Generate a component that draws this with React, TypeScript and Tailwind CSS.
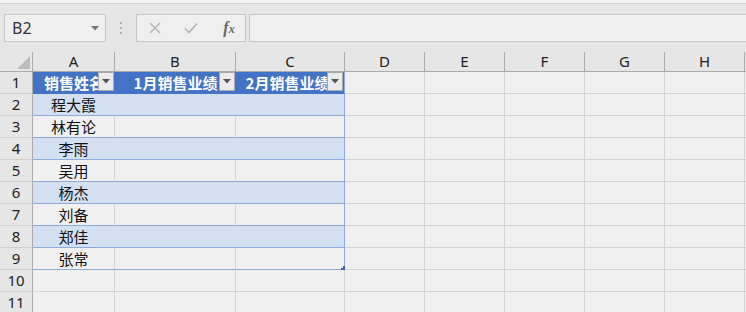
import React from "react";

const cols = [
  { key: "A", w: "w-[82px]" },
  { key: "B", w: "w-[121px]" },
  { key: "C", w: "w-[109px]" },
  { key: "D", w: "w-[80px]" },
  { key: "E", w: "w-[80px]" },
  { key: "F", w: "w-[80px]" },
  { key: "G", w: "w-[80px]" },
  { key: "H", w: "w-[80px]" },
];

const names = ["程大霞", "林有论", "李雨", "吴用", "杨杰", "刘备", "郑佳", "张常"];

const cjk = "font-['Noto_Sans_CJK_SC',sans-serif]";
const latin = "font-['Noto_Sans','Liberation_Sans',sans-serif]";

function FilterButton() {
  return (
    <div className="absolute right-[1px] top-[0px] w-[16px] h-[19px] bg-[#ebebeb] border border-[#a9a9a9] flex items-center justify-center">
      <svg width="8" height="5" viewBox="0 0 8 5">
        <path d="M0 0 L8 0 L4 4.5 Z" fill="#555" />
      </svg>
    </div>
  );
}

function HeaderRow() {
  return (
    <div className="flex h-[22px]">
      <div className="w-[33px] shrink-0 bg-[#e6e6e6] border-r border-b border-r-[#ababab] border-b-[#d0d0d0] flex items-center justify-center text-[15px] text-[#222]">
        1
      </div>
      {cols.map((c, i) => {
        if (i < 3) {
          const label = i === 0 ? "销售姓名" : i === 1 ? "1月销售业绩" : "2月销售业绩";
          return (
            <div
              key={c.key}
              className={`${c.w} shrink-0 relative bg-[#4472c4] border-b border-[#4472c4] ${i === 2 ? "border-r border-r-[#8ea9db] pr-[5px]" : ""} overflow-hidden flex items-center justify-center`}
            >
              <span className={`${cjk} font-bold text-white text-[15px] whitespace-nowrap leading-none`}>{label}</span>
              <FilterButton />
            </div>
          );
        }
        return <div key={c.key} className={`${c.w} shrink-0 bg-[#f0f0f0] border-r border-b border-[#d4d4d4]`} />;
      })}
      <div className="flex-1 bg-[#f0f0f0] border-b border-[#d4d4d4]" />
    </div>
  );
}

function DataRow({ n, name }: { n: number; name?: string }) {
  const inTable = n >= 2 && n <= 9;
  const banded = inTable && n % 2 === 0;
  return (
    <div className="flex h-[22px]">
      <div className="w-[33px] shrink-0 bg-[#e6e6e6] border-r border-b border-r-[#ababab] border-b-[#d0d0d0] flex items-center justify-center text-[15px] text-[#222]">
        {n}
      </div>
      {cols.map((c, i) => {
        if (inTable && i < 3) {
          return (
            <div
              key={c.key}
              className={`${c.w} shrink-0 relative border-b border-b-[#8ea9db] ${banded ? "bg-[#d2e0f1]" : "bg-[#f0f0f0]"} ${
                i === 2 ? "border-r border-r-[#8ea9db]" : banded ? "" : "border-r border-r-[#d4d4d4]"
              } ${banded && i < 2 ? "pr-[1px]" : ""} flex items-center justify-center`}
            >
              {i === 0 && name && <span className={`${cjk} text-[15px] text-[#111] leading-none`}>{name}</span>}
              {n === 9 && i === 2 && (
                <div className="absolute right-[-1px] bottom-[-1px] w-[5px] h-[5px]">
                  <div className="absolute right-0 bottom-0 w-[4px] h-[2px] bg-[#3f5fa8]" />
                  <div className="absolute right-0 bottom-0 w-[2px] h-[4px] bg-[#3f5fa8]" />
                </div>
              )}
            </div>
          );
        }
        return <div key={c.key} className={`${c.w} shrink-0 bg-[#f0f0f0] border-r border-b border-[#d4d4d4]`} />;
      })}
      <div className="flex-1 bg-[#f0f0f0] border-b border-[#d4d4d4]" />
    </div>
  );
}

export default function App() {
  return (
    <div className={`w-[746px] h-[312px] overflow-hidden bg-[#e6e6e6] ${latin}`}>
      {/* top strip */}
      <div className="h-[4px] bg-[#f3f3f3] border-b border-[#cfcfcf]" />

      {/* name box + formula bar */}
      <div className="flex items-start pt-[10px] h-[48px]">
        <div className="ml-[4px] w-[102px] h-[28px] bg-[#efefef] border border-[#c6c6c6] flex items-center justify-between pl-[7px] pr-[6px]">
          <span className="text-[16px] text-[#333] leading-none">B2</span>
          <svg width="8" height="5" viewBox="0 0 8 5">
            <path d="M0 0 L8 0 L4 4.5 Z" fill="#777" />
          </svg>
        </div>
        <div className="w-[30px] h-[28px] flex flex-col items-center justify-center gap-[3px]">
          <div className="w-[2px] h-[2px] bg-[#b0b0b0]" />
          <div className="w-[2px] h-[2px] bg-[#b0b0b0]" />
          <div className="w-[2px] h-[2px] bg-[#b0b0b0]" />
        </div>
        <div className="w-[110px] h-[28px] bg-[#efefef] border border-[#c6c6c6] flex items-center">
          <div className="w-[36px] flex justify-center">
            <svg width="12" height="12" viewBox="0 0 12 12">
              <path d="M1 1 L11 11 M11 1 L1 11" stroke="#b3b3b3" strokeWidth="1.4" />
            </svg>
          </div>
          <div className="w-[36px] flex justify-center">
            <svg width="14" height="12" viewBox="0 0 14 12">
              <path d="M1 6.5 L5 10.5 L13 1.5" stroke="#b3b3b3" strokeWidth="1.6" fill="none" />
            </svg>
          </div>
          <div className="w-[36px] flex justify-center pl-[4px]">
            <span className="font-['Liberation_Serif',serif] italic font-bold text-[16px] text-[#666] leading-none">
              f<span className="text-[12px]">x</span>
            </span>
          </div>
        </div>
        <div className="ml-[3px] flex-1 h-[28px] bg-[#efefef] border-y border-l border-[#c6c6c6]" />
      </div>

      {/* column headers */}
      <div className="flex h-[20px] border-b border-[#ababab]">
        <div className="w-[33px] shrink-0 border-r border-[#ababab] relative">
          <svg className="absolute right-[2px] bottom-[2px]" width="13" height="13" viewBox="0 0 13 13">
            <path d="M13 0 L13 13 L0 13 Z" fill="#bdbdbd" />
          </svg>
        </div>
        {cols.map((c) => (
          <div
            key={c.key}
            className={`${c.w} shrink-0 border-r border-[#ababab] flex items-center justify-center text-[15px] text-[#222] leading-none`}
          >
            {c.key}
          </div>
        ))}
        <div className="flex-1" />
      </div>

      <HeaderRow />
      {names.map((nm, i) => (
        <DataRow key={i} n={i + 2} name={nm} />
      ))}
      <DataRow n={10} />
      <DataRow n={11} />
    </div>
  );
}
